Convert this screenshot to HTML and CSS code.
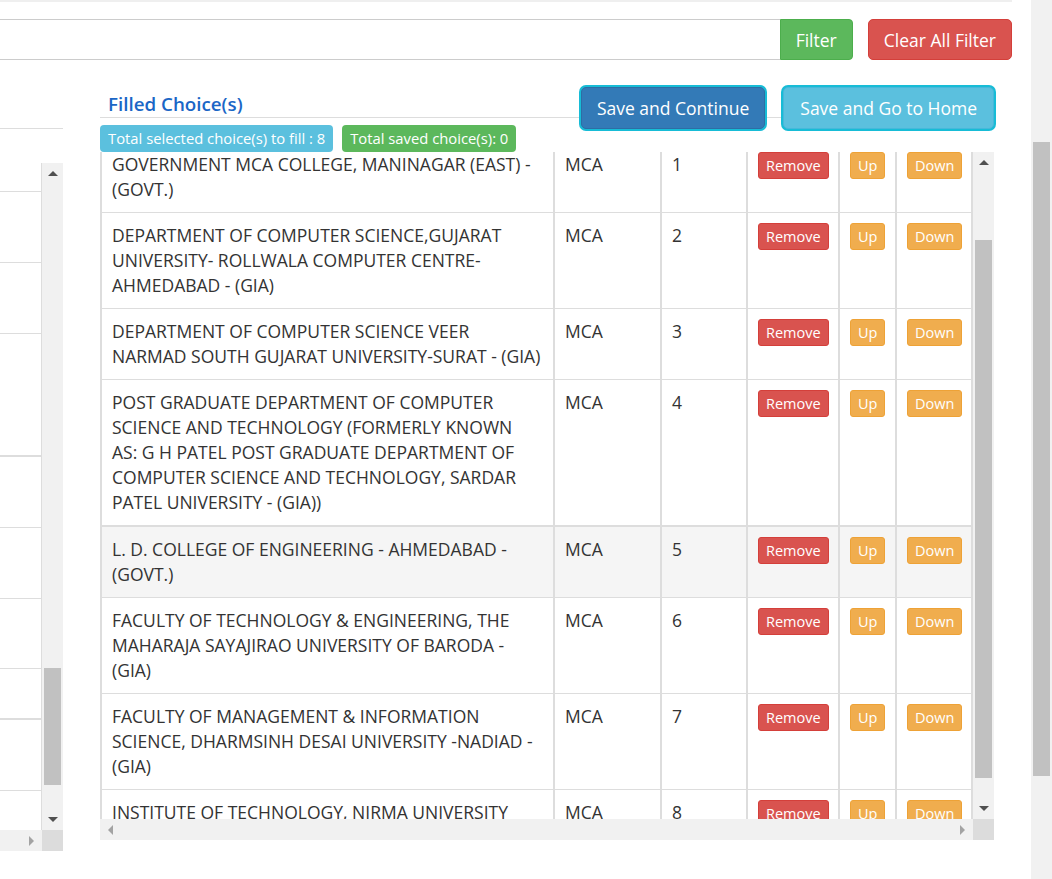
FILE: index.html
```html
<!DOCTYPE html>
<html lang="en">
<head>
<meta charset="utf-8">
<title>Filled Choice(s)</title>
<link rel="stylesheet" href="styles.css">
</head>
<body>
<div class="page">
  <div class="top-strip"></div>

  <div class="filter-row">
    <div class="input-group">
      <input class="filter-input" type="text" aria-label="Filter">
      <button class="btn btn-filter" type="button">Filter</button>
    </div>
    <button class="btn btn-clear" type="button">Clear All Filter</button>
  </div>

  <div class="main-row">
    <div class="left-col">
      <div class="left-head"></div>
      <div class="scroll-frame">
        <div class="scroll-view">
          <div class="lr lr-top"></div>
          <div class="lr"></div>
          <div class="lr"></div>
          <div class="lr lr-tall"></div>
          <div class="lr"></div>
          <div class="lr"></div>
          <div class="lr lr-70"></div>
          <div class="lr lr-short"></div>
          <div class="lr"></div>
          <div class="lr lr-end"></div>
        </div>
        <div class="vbar">
          <span class="sb-btn"><i class="tri tri-up"></i></span>
          <div class="sb-track"><div class="sb-thumb left-thumb"></div></div>
          <span class="sb-btn"><i class="tri tri-down"></i></span>
        </div>
        <div class="hbar">
          <div class="sb-track"></div>
          <span class="sb-btn"><i class="tri tri-right"></i></span>
        </div>
        <div class="sb-corner"></div>
      </div>
    </div>

    <div class="right-col">
      <div class="panel-head">
        <h4 class="section-title">Filled Choice(s)</h4>
        <div class="actions">
          <button class="btn btn-lg btn-primary" type="button">Save and Continue</button>
          <button class="btn btn-lg btn-info" type="button">Save and Go to Home</button>
        </div>
      </div>
      <div class="badges">
        <span class="badge badge-info">Total selected choice(s) to fill : 8</span>
        <span class="badge badge-success">Total saved choice(s): 0</span>
      </div>
      <div class="scroll-frame table-frame">
        <div class="scroll-view table-view">
          <table class="choices">
            <tbody>
              <tr>
                <td class="c-name">GOVERNMENT MCA COLLEGE, MANINAGAR (EAST) - (GOVT.)</td>
                <td class="c-course">MCA</td>
                <td class="c-no">1</td>
                <td class="c-rem"><button class="btn btn-sm btn-danger" type="button">Remove</button></td>
                <td class="c-up"><button class="btn btn-sm btn-warning" type="button">Up</button></td>
                <td class="c-down"><button class="btn btn-sm btn-warning" type="button">Down</button></td>
              </tr>
              <tr>
                <td>DEPARTMENT OF COMPUTER SCIENCE,GUJARAT UNIVERSITY- ROLLWALA COMPUTER CENTRE- AHMEDABAD - (GIA)</td>
                <td>MCA</td><td>2</td>
                <td><button class="btn btn-sm btn-danger" type="button">Remove</button></td>
                <td><button class="btn btn-sm btn-warning" type="button">Up</button></td>
                <td><button class="btn btn-sm btn-warning" type="button">Down</button></td>
              </tr>
              <tr>
                <td>DEPARTMENT OF COMPUTER SCIENCE VEER NARMAD SOUTH GUJARAT UNIVERSITY-SURAT - (GIA)</td>
                <td>MCA</td><td>3</td>
                <td><button class="btn btn-sm btn-danger" type="button">Remove</button></td>
                <td><button class="btn btn-sm btn-warning" type="button">Up</button></td>
                <td><button class="btn btn-sm btn-warning" type="button">Down</button></td>
              </tr>
              <tr>
                <td>POST GRADUATE DEPARTMENT OF COMPUTER SCIENCE AND TECHNOLOGY (FORMERLY KNOWN AS: G H PATEL POST GRADUATE DEPARTMENT OF COMPUTER SCIENCE AND TECHNOLOGY, SARDAR PATEL UNIVERSITY - (GIA))</td>
                <td>MCA</td><td>4</td>
                <td><button class="btn btn-sm btn-danger" type="button">Remove</button></td>
                <td><button class="btn btn-sm btn-warning" type="button">Up</button></td>
                <td><button class="btn btn-sm btn-warning" type="button">Down</button></td>
              </tr>
              <tr class="active">
                <td>L. D. COLLEGE OF ENGINEERING - AHMEDABAD - (GOVT.)</td>
                <td>MCA</td><td>5</td>
                <td><button class="btn btn-sm btn-danger" type="button">Remove</button></td>
                <td><button class="btn btn-sm btn-warning" type="button">Up</button></td>
                <td><button class="btn btn-sm btn-warning" type="button">Down</button></td>
              </tr>
              <tr>
                <td>FACULTY OF TECHNOLOGY &amp; ENGINEERING, THE MAHARAJA SAYAJIRAO UNIVERSITY OF BARODA - (GIA)</td>
                <td>MCA</td><td>6</td>
                <td><button class="btn btn-sm btn-danger" type="button">Remove</button></td>
                <td><button class="btn btn-sm btn-warning" type="button">Up</button></td>
                <td><button class="btn btn-sm btn-warning" type="button">Down</button></td>
              </tr>
              <tr>
                <td>FACULTY OF MANAGEMENT &amp; INFORMATION SCIENCE, DHARMSINH DESAI UNIVERSITY -NADIAD - (GIA)</td>
                <td>MCA</td><td>7</td>
                <td><button class="btn btn-sm btn-danger" type="button">Remove</button></td>
                <td><button class="btn btn-sm btn-warning" type="button">Up</button></td>
                <td><button class="btn btn-sm btn-warning" type="button">Down</button></td>
              </tr>
              <tr>
                <td>INSTITUTE OF TECHNOLOGY, NIRMA UNIVERSITY AHMEDABAD - (SFI)</td>
                <td>MCA</td><td>8</td>
                <td><button class="btn btn-sm btn-danger" type="button">Remove</button></td>
                <td><button class="btn btn-sm btn-warning" type="button">Up</button></td>
                <td><button class="btn btn-sm btn-warning" type="button">Down</button></td>
              </tr>
            </tbody>
          </table>
        </div>
        <div class="vbar">
          <span class="sb-btn"><i class="tri tri-up"></i></span>
          <div class="sb-track"><div class="sb-thumb table-thumb"></div></div>
          <span class="sb-btn"><i class="tri tri-down"></i></span>
        </div>
        <div class="hbar">
          <span class="sb-btn"><i class="tri tri-left"></i></span>
          <div class="sb-track"></div>
          <span class="sb-btn"><i class="tri tri-right"></i></span>
        </div>
        <div class="sb-corner"></div>
      </div>
    </div>
  </div>
</div>
<div class="page-bar"><div class="page-thumb"></div></div>
<script src="script.js"></script>
</body>
</html>
```

FILE: styles.css
```css
body {
  margin: 0;
  height: 879px;
  overflow: hidden;
  display: flex;
  font-family: "Open Sans", "Liberation Sans", sans-serif;
  color: #333;
  background: #fff;
}

.page {
  width: 1031px;
  flex: none;
}

/* page scrollbar */
.page-bar {
  flex: 1;
  background: #f1f1f1;
  padding: 142px 2px 0;
}
.page-thumb {
  height: 634px;
  background: #c1c1c1;
}

.top-strip {
  width: 1012px;
  height: 2px;
  background: #efefef;
}

/* filter row */
.filter-row {
  display: flex;
  width: 1012px;
  margin-top: 17px;
  height: 41px;
}

.input-group {
  display: flex;
  flex: 1;
}

.filter-input {
  flex: 1;
  min-width: 0;
  height: 41px;
  box-sizing: border-box;
  margin: 0;
  padding: 6px 12px;
  border: 1px solid #ccc;
  border-left: 0;
  border-right: 0;
  font: inherit;
}

.btn {
  font-family: inherit;
  color: #fff;
  margin: 0;
  cursor: pointer;
  box-sizing: border-box;
}

.btn-filter {
  height: 41px;
  padding: 0 15px;
  font-size: 17.5px;
  line-height: 26px;
  background: #5cb85c;
  border: 1px solid #4cae4c;
  border-radius: 0 4px 4px 0;
}

.btn-clear {
  margin-left: 15px;
  height: 41px;
  padding: 0 15px;
  font-size: 17.5px;
  line-height: 26px;
  background: #d9534f;
  border: 1px solid #d43f3a;
  border-radius: 5px;
}

/* main row */
.main-row {
  display: flex;
  gap: 37px;
  margin-top: 25px;
}

.left-col {
  width: 63px;
  flex: none;
}

.left-head {
  height: 43px;
  border-bottom: 1px solid #ddd;
}

.left-col .scroll-frame {
  margin-top: 34px;
}

.lr {
  height: 71px;
  box-sizing: border-box;
  border-right: 1px solid #ddd;
  border-bottom: 1px solid #ddd;
}
.lr-top { height: 29px; }
.lr-tall { height: 123px; border-bottom-width: 2px; }
.lr-70 { height: 70px; }
.lr-short { height: 51px; border-bottom-width: 2px; }
.lr-end { height: 40px; border-bottom: 0; }

/* fake scroll frames */
.scroll-frame {
  display: grid;
  grid-template-columns: 1fr 21px;
  grid-template-rows: 667px 21px;
}

.scroll-view {
  overflow: hidden;
  min-width: 0;
}

.vbar {
  display: flex;
  flex-direction: column;
  background: #f1f1f1;
}

.hbar {
  display: flex;
  background: #f1f1f1;
}

.sb-btn {
  flex: none;
  width: 21px;
  height: 21px;
  display: flex;
  align-items: center;
  justify-content: center;
}

.sb-track {
  flex: 1;
}

.sb-thumb {
  margin: 0 2px;
  background: #c1c1c1;
}

.left-thumb {
  margin-top: 484px;
  height: 117px;
}

.table-thumb {
  margin-top: 67px;
  height: 538px;
}

.sb-corner {
  background: #dcdcdc;
}

.tri {
  display: block;
  width: 0;
  height: 0;
}
.tri-up {
  border-left: 5px solid transparent;
  border-right: 5px solid transparent;
  border-bottom: 5px solid #505050;
}
.tri-down {
  border-left: 5px solid transparent;
  border-right: 5px solid transparent;
  border-top: 5px solid #505050;
}
.tri-left {
  border-top: 5px solid transparent;
  border-bottom: 5px solid transparent;
  border-right: 5px solid #a3a3a3;
}
.tri-right {
  border-top: 5px solid transparent;
  border-bottom: 5px solid transparent;
  border-left: 5px solid #a3a3a3;
}

/* right column */
.right-col {
  width: 896px;
  flex: none;
}

.panel-head {
  display: flex;
  align-items: flex-start;
  justify-content: space-between;
  height: 32px;
  border-bottom: 1px solid #ddd;
}

.actions {
  display: flex;
  gap: 18px;
  margin: 2px 2px 0 0;
}

.btn-lg {
  font-size: 17.5px;
  line-height: 26px;
  padding: 7px 16px;
  border-radius: 5px;
  box-shadow: 0 0 0 2px #17bcd6;
  white-space: nowrap;
}

.btn-primary {
  background: #337ab7;
  border: 1px solid #2e6da4;
  padding-left: 15px;
  padding-right: 15px;
}

.btn-info {
  background: #5bc0de;
  border: 1px solid #46b8da;
}

.section-title {
  margin: 0;
  padding: 6px 0 0 8px;
  font-size: 18.75px;
  font-weight: 600;
  line-height: 26px;
  color: #1a66c6;
}

.badges {
  display: flex;
  gap: 9px;
  margin-top: 7px;
}

.badge {
  font-size: 14.8px;
  line-height: 20px;
  padding: 3px 8px 4px;
  border-radius: 4px;
  color: #fff;
}

.badge-info {
  background: #5bc0de;
}

.badge-success {
  background: #5cb85c;
}

.table-frame {
  margin-right: 2px;
}

.choices {
  width: 100%;
  table-layout: fixed;
  border-collapse: separate;
  border-spacing: 0;
  border-left: 1px solid #ddd;
  border-right: 1px solid #ddd;
  font-size: 17.5px;
  line-height: 25px;
}

.choices td {
  border: 1px solid #ddd;
  border-bottom: 0;
  padding: 10px;
  vertical-align: top;
  text-align: left;
}

.choices td:first-child {
  padding-right: 12px;
}

.c-name { width: 429px; }
.c-course { width: 85px; }
.c-no { width: 64px; }
.c-rem { width: 70px; }
.c-up { width: 35px; }
.c-down { width: 54px; }

.choices tr.active td {
  background: #f5f5f5;
  border-top-width: 2px;
}

.btn-sm {
  display: inline-block;
  vertical-align: top;
  font-size: 14.5px;
  line-height: 21px;
  padding: 2px 7px;
  border-radius: 3px;
}

.btn-danger {
  background: #d9534f;
  border: 1px solid #d43f3a;
}

.btn-warning {
  background: #f0ad4e;
  border: 1px solid #eea236;
}
```

FILE: script.js
```js
(function () {
  function applyScroll() {
    var view = document.querySelector('.table-view');
    if (view) view.scrollTop = 11;
  }
  applyScroll();
  window.addEventListener('load', applyScroll);
})();
```
